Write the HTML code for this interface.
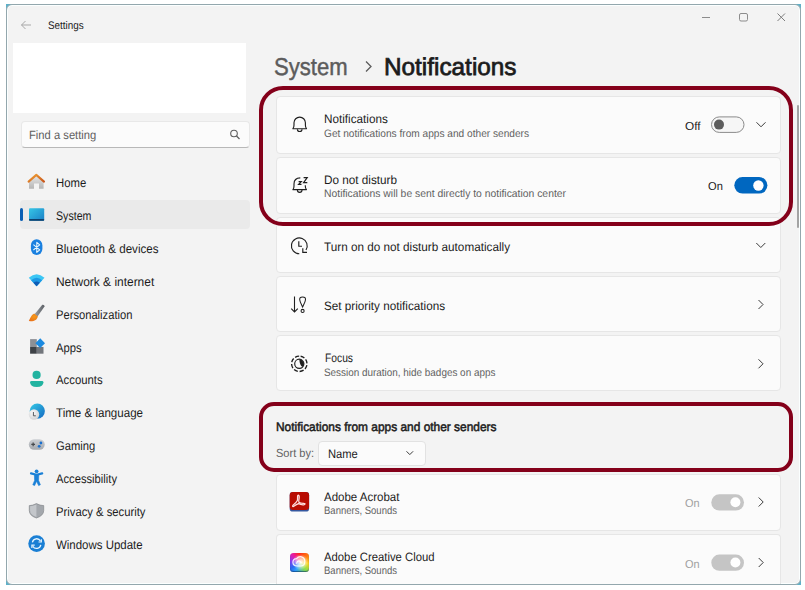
<!DOCTYPE html>
<html><head><meta charset="utf-8">
<style>
html,body{margin:0;padding:0;width:805px;height:590px;overflow:hidden;background:#fff;font-family:"Liberation Sans",sans-serif;}
.win{position:absolute;left:0;top:0;width:805px;height:590px;}
.a{position:absolute;}
.t{position:absolute;line-height:1;white-space:nowrap;transform-origin:0 0;text-rendering:geometricPrecision;}
.card{position:absolute;left:275.5px;width:505px;background:#fbfbfb;border:1px solid #e6e6e6;border-radius:4px;box-sizing:border-box;}
.hl{position:absolute;border:4px solid #84001a;box-sizing:border-box;}
svg{position:absolute;overflow:visible;}
</style></head><body><div class="win">
<!-- window frame -->
<div class="a" style="left:6px;top:4px;width:795px;height:581px;background:#5fb0c8;"></div>
<div class="a" style="left:6px;top:4px;width:795px;height:581px;background:#f3f3f3;border:1px solid #93a7ad;border-radius:6px;box-sizing:border-box;box-shadow:inset 0 0 0 1px #fbffff;"></div>
<!-- title bar -->
<svg style="left:0;top:0" width="805" height="40">
<path d="M21.5 25 L31 25 M21.5 25 L25.5 21 M21.5 25 L25.5 29" stroke="#a3a3a3" stroke-width="0.95" fill="none"/>
<path d="M702 17.5 H710" stroke="#8c8c8c" stroke-width="1"/>
<rect x="739.5" y="13.5" width="8" height="7.5" rx="1.5" stroke="#8c8c8c" stroke-width="1" fill="none"/>
<path d="M777.5 13.5 L785 21 M785 13.5 L777.5 21" stroke="#7c7c7c" stroke-width="1"/>
</svg>
<!-- account rect -->
<div class="a" style="left:13px;top:43px;width:233px;height:70px;background:#fff;"></div>
<!-- search -->
<div class="a" style="left:20.5px;top:121.3px;width:229.7px;height:26.8px;background:#fbfbfb;border:1px solid #e8e8e8;border-bottom:1.3px solid #b8b8b8;border-radius:4px;box-sizing:border-box;"></div>
<svg style="left:0;top:0" width="260" height="160">
<circle cx="234" cy="133.5" r="3.3" stroke="#5f5f5f" stroke-width="1.1" fill="none"/>
<path d="M236.5 136 L239.5 139" stroke="#5f5f5f" stroke-width="1.2"/>
</svg>
<!-- selected nav -->
<div class="a" style="left:20px;top:200px;width:230px;height:29px;background:#eaeaea;border-radius:4px;"></div>
<div class="a" style="left:20px;top:208px;width:3px;height:13px;background:#0a5fb4;border-radius:2px;"></div>
<!-- nav icons -->
<svg style="left:0;top:0" width="260" height="590">
<defs>
<linearGradient id="gsys" x1="0" y1="0" x2="1" y2="1"><stop offset="0" stop-color="#36c6e6"/><stop offset="1" stop-color="#1a7fc6"/></linearGradient>
<linearGradient id="ghome" x1="0" y1="0" x2="0" y2="1"><stop offset="0" stop-color="#e6e6e6"/><stop offset="1" stop-color="#b5b5b5"/></linearGradient>
</defs>
<!-- home -->
<defs><linearGradient id="groof" x1="0" y1="0" x2="1" y2="1"><stop offset="0" stop-color="#f0a236"/><stop offset="1" stop-color="#c9561a"/></linearGradient></defs>
<path d="M29 181.5 L36.3 175.6 L43.6 181.5 V188.7 H39 V183.5 H34 V188.7 H29 Z" fill="url(#ghome)"/>
<path d="M28.6 181.6 L36.3 174.9 L44 181.6" stroke="url(#groof)" stroke-width="2.1" fill="none" stroke-linejoin="round" stroke-linecap="round"/>
<!-- system -->
<rect x="29" y="208.2" width="15.2" height="12.5" rx="1" fill="url(#gsys)"/>
<rect x="29" y="219" width="15.2" height="1.7" rx="0.8" fill="#0d3f6c"/>
<!-- bluetooth -->
<rect x="30.9" y="239.2" width="11.5" height="15.8" rx="5.75" ry="6.2" fill="#1a80e0"/>
<path d="M33.4 244.6 L39.7 249.8 L36.8 252.4 V242.3 L39.7 244.9 L33.4 250" stroke="#eaf8ff" stroke-width="1.05" fill="none" stroke-linejoin="round"/>
<!-- wifi -->
<path d="M28.8 277.8 Q36.6 270.6 44.5 277.8 L36.6 286.2 Z" fill="#3cc6f4"/>
<path d="M31.1 280.3 Q36.6 275.2 42.1 280.3 L36.6 286.2 Z" fill="#1c98e4"/>
<path d="M33.4 282.8 Q36.6 280 39.8 282.8 L36.6 286.2 Z" fill="#0e5cb5"/>
<!-- brush -->
<defs><linearGradient id="gbr" x1="0" y1="0" x2="1" y2="0"><stop offset="0" stop-color="#9a9ea3"/><stop offset="1" stop-color="#5c6065"/></linearGradient>
<radialGradient id="gtip" cx="0.6" cy="0.4" r="0.7"><stop offset="0" stop-color="#f59a1a"/><stop offset="1" stop-color="#e8701a"/></radialGradient></defs>
<path d="M42.3 304.8 Q44.6 304.4 44.5 306.5 L37.5 316.4 L34.5 314.2 Z" fill="url(#gbr)"/>
<path d="M34.2 313.6 L37.9 316.6 Q37 320.2 33.5 320.9 Q31 321.3 28.8 321 Q29.6 319.6 30.5 317.6 Q31.8 314.6 34.2 313.6 Z" fill="url(#gtip)"/>
<!-- apps -->
<rect x="30.1" y="339.1" width="6.7" height="7.8" fill="#8d9096"/>
<rect x="30.1" y="346.9" width="6.7" height="6.8" fill="#3e4247"/>
<rect x="36.8" y="346.9" width="6.7" height="6.8" fill="#72767c"/>
<path d="M40.2 338.3 L45 343.2 L40.2 348 L35.4 343.2 Z" fill="#1b8ae0"/>
<!-- accounts -->
<circle cx="36.6" cy="374.9" r="4.1" fill="#22b3a0"/>
<path d="M30.1 382.2 Q30.1 380.9 31.5 380.9 H42 Q43.4 380.9 43.4 382.2 Q43.4 386.9 36.75 386.9 Q30.1 386.9 30.1 382.2 Z" fill="#22b3a0"/>
<!-- time -->
<defs><linearGradient id="gglobe" x1="0" y1="0" x2="1" y2="1"><stop offset="0" stop-color="#35cbe6"/><stop offset="1" stop-color="#1468c2"/></linearGradient>
<radialGradient id="gclk" cx="0.4" cy="0.35" r="0.7"><stop offset="0" stop-color="#fafafa"/><stop offset="1" stop-color="#cfd0d2"/></radialGradient></defs>
<circle cx="37.3" cy="411.1" r="7.6" fill="url(#gglobe)"/>
<circle cx="34" cy="414.5" r="5.2" fill="url(#gclk)"/>
<path d="M33.4 412 V415.8 H35.8" stroke="#55585c" stroke-width="1" fill="none"/>
<!-- gaming -->
<defs><linearGradient id="ggame" x1="0" y1="0" x2="0" y2="1"><stop offset="0" stop-color="#cdd0d4"/><stop offset="1" stop-color="#a5a9ae"/></linearGradient></defs>
<rect x="28.8" y="439.2" width="15.9" height="10.5" rx="5.2" fill="url(#ggame)"/>
<path d="M31.3 444.4 H35 M33.15 442.5 V446.3" stroke="#45484c" stroke-width="1.2"/>
<circle cx="40.9" cy="443" r="1.4" fill="#1a70cf"/><circle cx="39.2" cy="446.3" r="1.4" fill="#1a70cf"/>
<!-- accessibility -->
<circle cx="36.6" cy="471.3" r="1.9" fill="#1a80d6"/>
<path d="M31 473.4 L36.6 474.8 L42.2 473.4" stroke="#1a80d6" stroke-width="2.2" fill="none" stroke-linecap="round" stroke-linejoin="round"/>
<path d="M34.4 474.5 H38.8 L38.6 480.5 L40.4 484.8 L38.6 485.6 L36.6 481.2 L34.6 485.6 L32.8 484.8 L34.6 480.5 Z" fill="#1a80d6" stroke="#1a80d6" stroke-width="0.6" stroke-linejoin="round"/>
<!-- shield -->
<path d="M36.4 503.6 Q40 505.6 43.7 505.6 V510.5 Q43.7 515.6 36.4 518 Q29.3 515.6 29.3 510.5 V505.6 Q32.8 505.6 36.4 503.6 Z" fill="#a3a7ac" stroke="#85888c" stroke-width="0.7"/>
<path d="M36.4 504.5 Q33 506.3 30.1 506.3 V510.5 Q30.1 514.8 36.4 517 Z" fill="#c3c6ca"/>
<!-- windows update -->
<circle cx="36.6" cy="543.6" r="8.3" fill="#1a7fd4"/>
<path d="M32.4 542.3 A4.3 4.3 0 0 1 40.4 541" stroke="#e8f6ff" stroke-width="1.3" fill="none"/>
<path d="M40.8 544.9 A4.3 4.3 0 0 1 32.8 546.2" stroke="#e8f6ff" stroke-width="1.3" fill="none"/>
<path d="M41.3 539.2 V542 H38.5" stroke="#e8f6ff" stroke-width="1.2" fill="none"/>
<path d="M31.9 548 V545.2 H34.7" stroke="#e8f6ff" stroke-width="1.2" fill="none"/>
</svg>
<!-- cards -->
<div class="card" style="top:95.5px;height:58px;"></div>
<div class="card" style="top:156.5px;height:57px;"></div>
<div class="card" style="top:216.5px;height:56px;"></div>
<div class="card" style="top:275.5px;height:56px;"></div>
<div class="card" style="top:334.5px;height:56px;"></div>
<div class="card" style="top:474px;height:56.5px;"></div>
<div class="card" style="top:533.5px;height:50px;border-bottom:none;border-radius:4px 4px 0 0"></div>
<!-- creative cloud -->
<div class="a" style="left:289.7px;top:552.8px;width:19.4px;height:19.4px;border-radius:3.5px;background:conic-gradient(from 0deg,#ff2a1a 0deg,#ff7a10 50deg,#ffd21a 95deg,#8be04a 140deg,#2fa0ff 205deg,#2a6af0 235deg,#8a3ef5 280deg,#ea1aa0 320deg,#ff2a1a 360deg);box-shadow:inset 0 -1px 1px rgba(0,40,90,0.6);"></div>
<div class="a" style="left:289.7px;top:552.8px;width:19.4px;height:19.4px;border-radius:3.5px;background:radial-gradient(circle at 55% 48%,rgba(255,255,255,0.95) 0,rgba(255,255,255,0.6) 4px,rgba(255,255,255,0) 8px);"></div>
<svg style="left:0;top:0" width="805" height="590"><path d="M297.2 566 Q292.9 566 292.9 562.3 Q292.9 558.8 296.6 558.6 Q298.4 556.2 301.4 556.8 Q304.8 557.6 304.8 561.5 Q304.8 566 300.6 566 Z M296.4 563.6 Q297.6 560.4 299.4 561 Q300.6 561.6 301.4 563" stroke="#fff" stroke-width="1.2" fill="none" opacity="0.9"/></svg>
<!-- dropdown -->
<div class="a" style="left:318.2px;top:440.6px;width:107.6px;height:25.2px;background:#fbfbfb;border:1px solid #e2e2e2;border-radius:4px;box-sizing:border-box;"></div>
<!-- card icons & controls -->
<svg style="left:0;top:0" width="805" height="590">
<!-- bell -->
<path d="M292.9 128.7 Q294 127.6 294 125 V122.8 A5.7 5.7 0 0 1 305.4 122.8 V125 Q305.4 127.6 306.5 128.7 Z" stroke="#1f1f1f" stroke-width="1.15" fill="none" stroke-linejoin="round"/>
<path d="M297.4 129.2 A2.3 2.3 0 0 0 302 129.2" stroke="#1f1f1f" stroke-width="1.15" fill="none"/>
<!-- dnd bell -->
<path d="M300.3 177.9 Q294 177.9 294 184 V186 Q294 188.6 292.9 189.6 H306.5 Q305.3 188.6 305.3 186 V185.2" stroke="#1f1f1f" stroke-width="1.15" fill="none" stroke-linejoin="round"/>
<path d="M297.4 190.1 A2.3 2.3 0 0 0 302 190.1" stroke="#1f1f1f" stroke-width="1.15" fill="none"/>
<path d="M298.6 181.6 H301.3 L298.6 184.4 H301.5" stroke="#1f1f1f" stroke-width="1.2" fill="none"/>
<path d="M303.6 177.7 H307.2 L303.6 182.6 H307.3" stroke="#1f1f1f" stroke-width="1.2" fill="none"/>
<!-- clock -->
<path d="M299.3 253.7 A7.9 7.9 0 1 1 306 250" stroke="#1f1f1f" stroke-width="1.15" fill="none"/>
<path d="M298.8 241.3 V246.2 H302" stroke="#1f1f1f" stroke-width="1.15" fill="none"/>
<path d="M302.8 248.3 V252.4 H307" stroke="#1f1f1f" stroke-width="1.15" fill="none"/>
<!-- priority -->
<path d="M294.5 296.6 V311.5 M291.2 308.6 L294.5 311.9 L297.8 308.6" stroke="#1f1f1f" stroke-width="1.1" fill="none"/>
<path d="M302.6 296.9 C304.9 296.9 305.6 298.1 305.5 299.8 C305.3 301.9 303.8 304.6 302.6 307.1 C301.4 304.6 299.9 301.9 299.7 299.8 C299.6 298.1 300.3 296.9 302.6 296.9 Z" stroke="#1f1f1f" stroke-width="1.05" fill="none"/>
<circle cx="302.6" cy="310.9" r="1.55" stroke="#1f1f1f" stroke-width="1.05" fill="none"/>
<!-- focus -->
<circle cx="299.3" cy="363.8" r="7.7" stroke="#1f1f1f" stroke-width="1.35" fill="none" stroke-dasharray="4.2 1.85" transform="rotate(-80 299.3 363.8)"/>
<circle cx="299.3" cy="363.8" r="4.6" stroke="#1f1f1f" stroke-width="1.15" fill="none"/>
<path d="M299.3 359.2 A4.6 4.6 0 0 1 302.6 367 Q299.6 365.5 299.3 359.2 Z" fill="#1f1f1f"/>
<!-- toggles -->
<rect x="711.5" y="116.9" width="32.5" height="15.5" rx="7.75" fill="#f6f6f6" stroke="#8a8a8a" stroke-width="1"/>
<circle cx="719" cy="124.6" r="5" fill="#5d5d5d"/>
<rect x="734.3" y="177.1" width="33.1" height="16.5" rx="8.25" fill="#0067c0"/>
<circle cx="758.4" cy="185.5" r="5.2" fill="#fff"/>
<rect x="711.3" y="494.3" width="32.7" height="16.2" rx="8.1" fill="#c5c5c5"/>
<circle cx="735.4" cy="502.2" r="5" fill="#fff"/>
<rect x="711.3" y="554.6" width="32.7" height="16.2" rx="8.1" fill="#c5c5c5"/>
<circle cx="735.4" cy="562.5" r="5" fill="#fff"/>
<!-- chevrons -->
<path d="M756.5 122.3 L761 126.8 L765.5 122.3" stroke="#3a3a3a" stroke-width="1" fill="none"/>
<path d="M756.3 243 L760.8 247.5 L765.3 243" stroke="#3a3a3a" stroke-width="1" fill="none"/>
<path d="M758.5 300 L763 304.5 L758.5 309" stroke="#3a3a3a" stroke-width="1" fill="none"/>
<path d="M758.5 359.3 L763 363.8 L758.5 368.3" stroke="#3a3a3a" stroke-width="1" fill="none"/>
<path d="M758.7 497.5 L763.2 502 L758.7 506.5" stroke="#3a3a3a" stroke-width="1" fill="none"/>
<path d="M758.7 558 L763.2 562.5 L758.7 567" stroke="#3a3a3a" stroke-width="1" fill="none"/>
<path d="M406.5 451.3 L409.8 454.6 L413.1 451.3" stroke="#3a3a3a" stroke-width="1" fill="none"/>
<!-- acrobat -->
<rect x="289.7" y="492" width="19.4" height="19.6" rx="3.2" fill="#35589f"/>
<rect x="289.7" y="492" width="19.4" height="18" rx="3.2" fill="#b80c02"/>
<path d="M298.3 495.2 Q299.6 495.6 299.1 498.5 Q298.6 501 298.9 502.3 Q300.6 503.4 303.5 503.3 Q305.2 503.5 305 504.2 Q304.8 505 303 504.8 Q300.6 504.6 298.6 503.6 Q296.2 504.5 294.2 506 Q292.8 507 292.6 506.1 Q292.6 505.3 294 504.3 Q296.4 502.3 297.5 500.2 Q297.6 497 297.6 496 Q297.7 495.1 298.3 495.2 Z" stroke="#ffdede" stroke-width="1.25" fill="none" stroke-linejoin="round"/>
<!-- breadcrumb chevron -->
<path d="M366 61.5 L371 66.5 L366 71.5" stroke="#5c5c5c" stroke-width="1.3" fill="none"/>
<!-- scrollbar -->
<rect x="797" y="105" width="2" height="123" rx="1" fill="#a3a3a3"/>
</svg>
<!-- highlight boxes -->
<div class="hl" style="left:259px;top:86px;width:534px;height:139.5px;border-radius:24px;"></div>
<div class="hl" style="left:259px;top:402px;width:534px;height:69.5px;border-radius:15px;"></div>
<div class="t" style="left:47.70px;top:21px;font-size:11px;font-weight:normal;color:#1b1b1b;transform:scaleX(0.8982);">Settings</div>
<div class="t" style="left:29.40px;top:129px;font-size:12px;font-weight:normal;color:#606060;transform:scaleX(0.9342);">Find a setting</div>
<div class="t" style="left:56.00px;top:177px;font-size:12.5px;font-weight:normal;color:#1b1b1b;transform:scaleX(0.9057);">Home</div>
<div class="t" style="left:56.00px;top:210px;font-size:12.5px;font-weight:normal;color:#1b1b1b;transform:scaleX(0.8494);">System</div>
<div class="t" style="left:56.00px;top:243px;font-size:12.5px;font-weight:normal;color:#1b1b1b;transform:scaleX(0.9277);">Bluetooth &amp; devices</div>
<div class="t" style="left:56.00px;top:276px;font-size:12.5px;font-weight:normal;color:#1b1b1b;transform:scaleX(0.9551);">Network &amp; internet</div>
<div class="t" style="left:56.00px;top:309px;font-size:12.5px;font-weight:normal;color:#1b1b1b;transform:scaleX(0.8939);">Personalization</div>
<div class="t" style="left:56.00px;top:342px;font-size:12.5px;font-weight:normal;color:#1b1b1b;transform:scaleX(0.8985);">Apps</div>
<div class="t" style="left:56.00px;top:374px;font-size:12.5px;font-weight:normal;color:#1b1b1b;transform:scaleX(0.9063);">Accounts</div>
<div class="t" style="left:56.00px;top:407px;font-size:12.5px;font-weight:normal;color:#1b1b1b;transform:scaleX(0.9252);">Time &amp; language</div>
<div class="t" style="left:56.00px;top:440px;font-size:12.5px;font-weight:normal;color:#1b1b1b;transform:scaleX(0.8956);">Gaming</div>
<div class="t" style="left:56.00px;top:473px;font-size:12.5px;font-weight:normal;color:#1b1b1b;transform:scaleX(0.8961);">Accessibility</div>
<div class="t" style="left:56.00px;top:506px;font-size:12.5px;font-weight:normal;color:#1b1b1b;transform:scaleX(0.9010);">Privacy &amp; security</div>
<div class="t" style="left:56.00px;top:539px;font-size:12.5px;font-weight:normal;color:#1b1b1b;transform:scaleX(0.9165);">Windows Update</div>
<div class="t" style="left:274.40px;top:56px;font-size:24.4px;font-weight:normal;color:#5c5c5c;transform:scaleX(0.9063);-webkit-text-stroke:0.45px #5c5c5c">System</div>
<div class="t" style="left:384.20px;top:56px;font-size:24.4px;font-weight:normal;color:#1b1b1b;transform:scaleX(0.9974);-webkit-text-stroke:0.75px #1b1b1b">Notifications</div>
<div class="t" style="left:324.30px;top:113px;font-size:12.2px;font-weight:normal;color:#1b1b1b;transform:scaleX(0.9611);">Notifications</div>
<div class="t" style="left:324.30px;top:129px;font-size:10.8px;font-weight:normal;color:#616161;transform:scaleX(0.9384);">Get notifications from apps and other senders</div>
<div class="t" style="left:684.70px;top:121px;font-size:11.6px;font-weight:normal;color:#1b1b1b;transform:scaleX(1.0163);">Off</div>
<div class="t" style="left:324.30px;top:174px;font-size:12.2px;font-weight:normal;color:#1b1b1b;transform:scaleX(0.9621);">Do not disturb</div>
<div class="t" style="left:324.30px;top:189px;font-size:10.8px;font-weight:normal;color:#616161;transform:scaleX(0.9601);">Notifications will be sent directly to notification center</div>
<div class="t" style="left:707.70px;top:181px;font-size:11.6px;font-weight:normal;color:#1b1b1b;transform:scaleX(0.9569);">On</div>
<div class="t" style="left:324.30px;top:241px;font-size:12.2px;font-weight:normal;color:#1b1b1b;transform:scaleX(0.9622);">Turn on do not disturb automatically</div>
<div class="t" style="left:324.30px;top:300px;font-size:12.2px;font-weight:normal;color:#1b1b1b;transform:scaleX(0.9604);">Set priority notifications</div>
<div class="t" style="left:324.50px;top:352px;font-size:12.2px;font-weight:normal;color:#1b1b1b;transform:scaleX(0.8437);">Focus</div>
<div class="t" style="left:324.30px;top:368px;font-size:10.8px;font-weight:normal;color:#616161;transform:scaleX(0.9181);">Session duration, hide badges on apps</div>
<div class="t" style="left:275.60px;top:421px;font-size:12.4px;font-weight:normal;color:#1b1b1b;transform:scaleX(0.9614);-webkit-text-stroke:0.5px #1b1b1b">Notifications from apps and other senders</div>
<div class="t" style="left:275.60px;top:448px;font-size:11.8px;font-weight:normal;color:#616161;transform:scaleX(0.9348);">Sort by:</div>
<div class="t" style="left:328.10px;top:448px;font-size:12.2px;font-weight:normal;color:#1b1b1b;transform:scaleX(0.9166);">Name</div>
<div class="t" style="left:324.30px;top:491px;font-size:12.2px;font-weight:normal;color:#1b1b1b;transform:scaleX(0.9426);">Adobe Acrobat</div>
<div class="t" style="left:324.30px;top:506px;font-size:10.8px;font-weight:normal;color:#616161;transform:scaleX(0.8813);">Banners, Sounds</div>
<div class="t" style="left:684.70px;top:498px;font-size:11.6px;font-weight:normal;color:#a0a0a0;transform:scaleX(0.9440);">On</div>
<div class="t" style="left:324.30px;top:551px;font-size:12.2px;font-weight:normal;color:#1b1b1b;transform:scaleX(0.9267);">Adobe Creative Cloud</div>
<div class="t" style="left:324.30px;top:566px;font-size:10.8px;font-weight:normal;color:#616161;transform:scaleX(0.8813);">Banners, Sounds</div>
<div class="t" style="left:684.70px;top:559px;font-size:11.6px;font-weight:normal;color:#a0a0a0;transform:scaleX(0.9440);">On</div>
</div></body></html>
